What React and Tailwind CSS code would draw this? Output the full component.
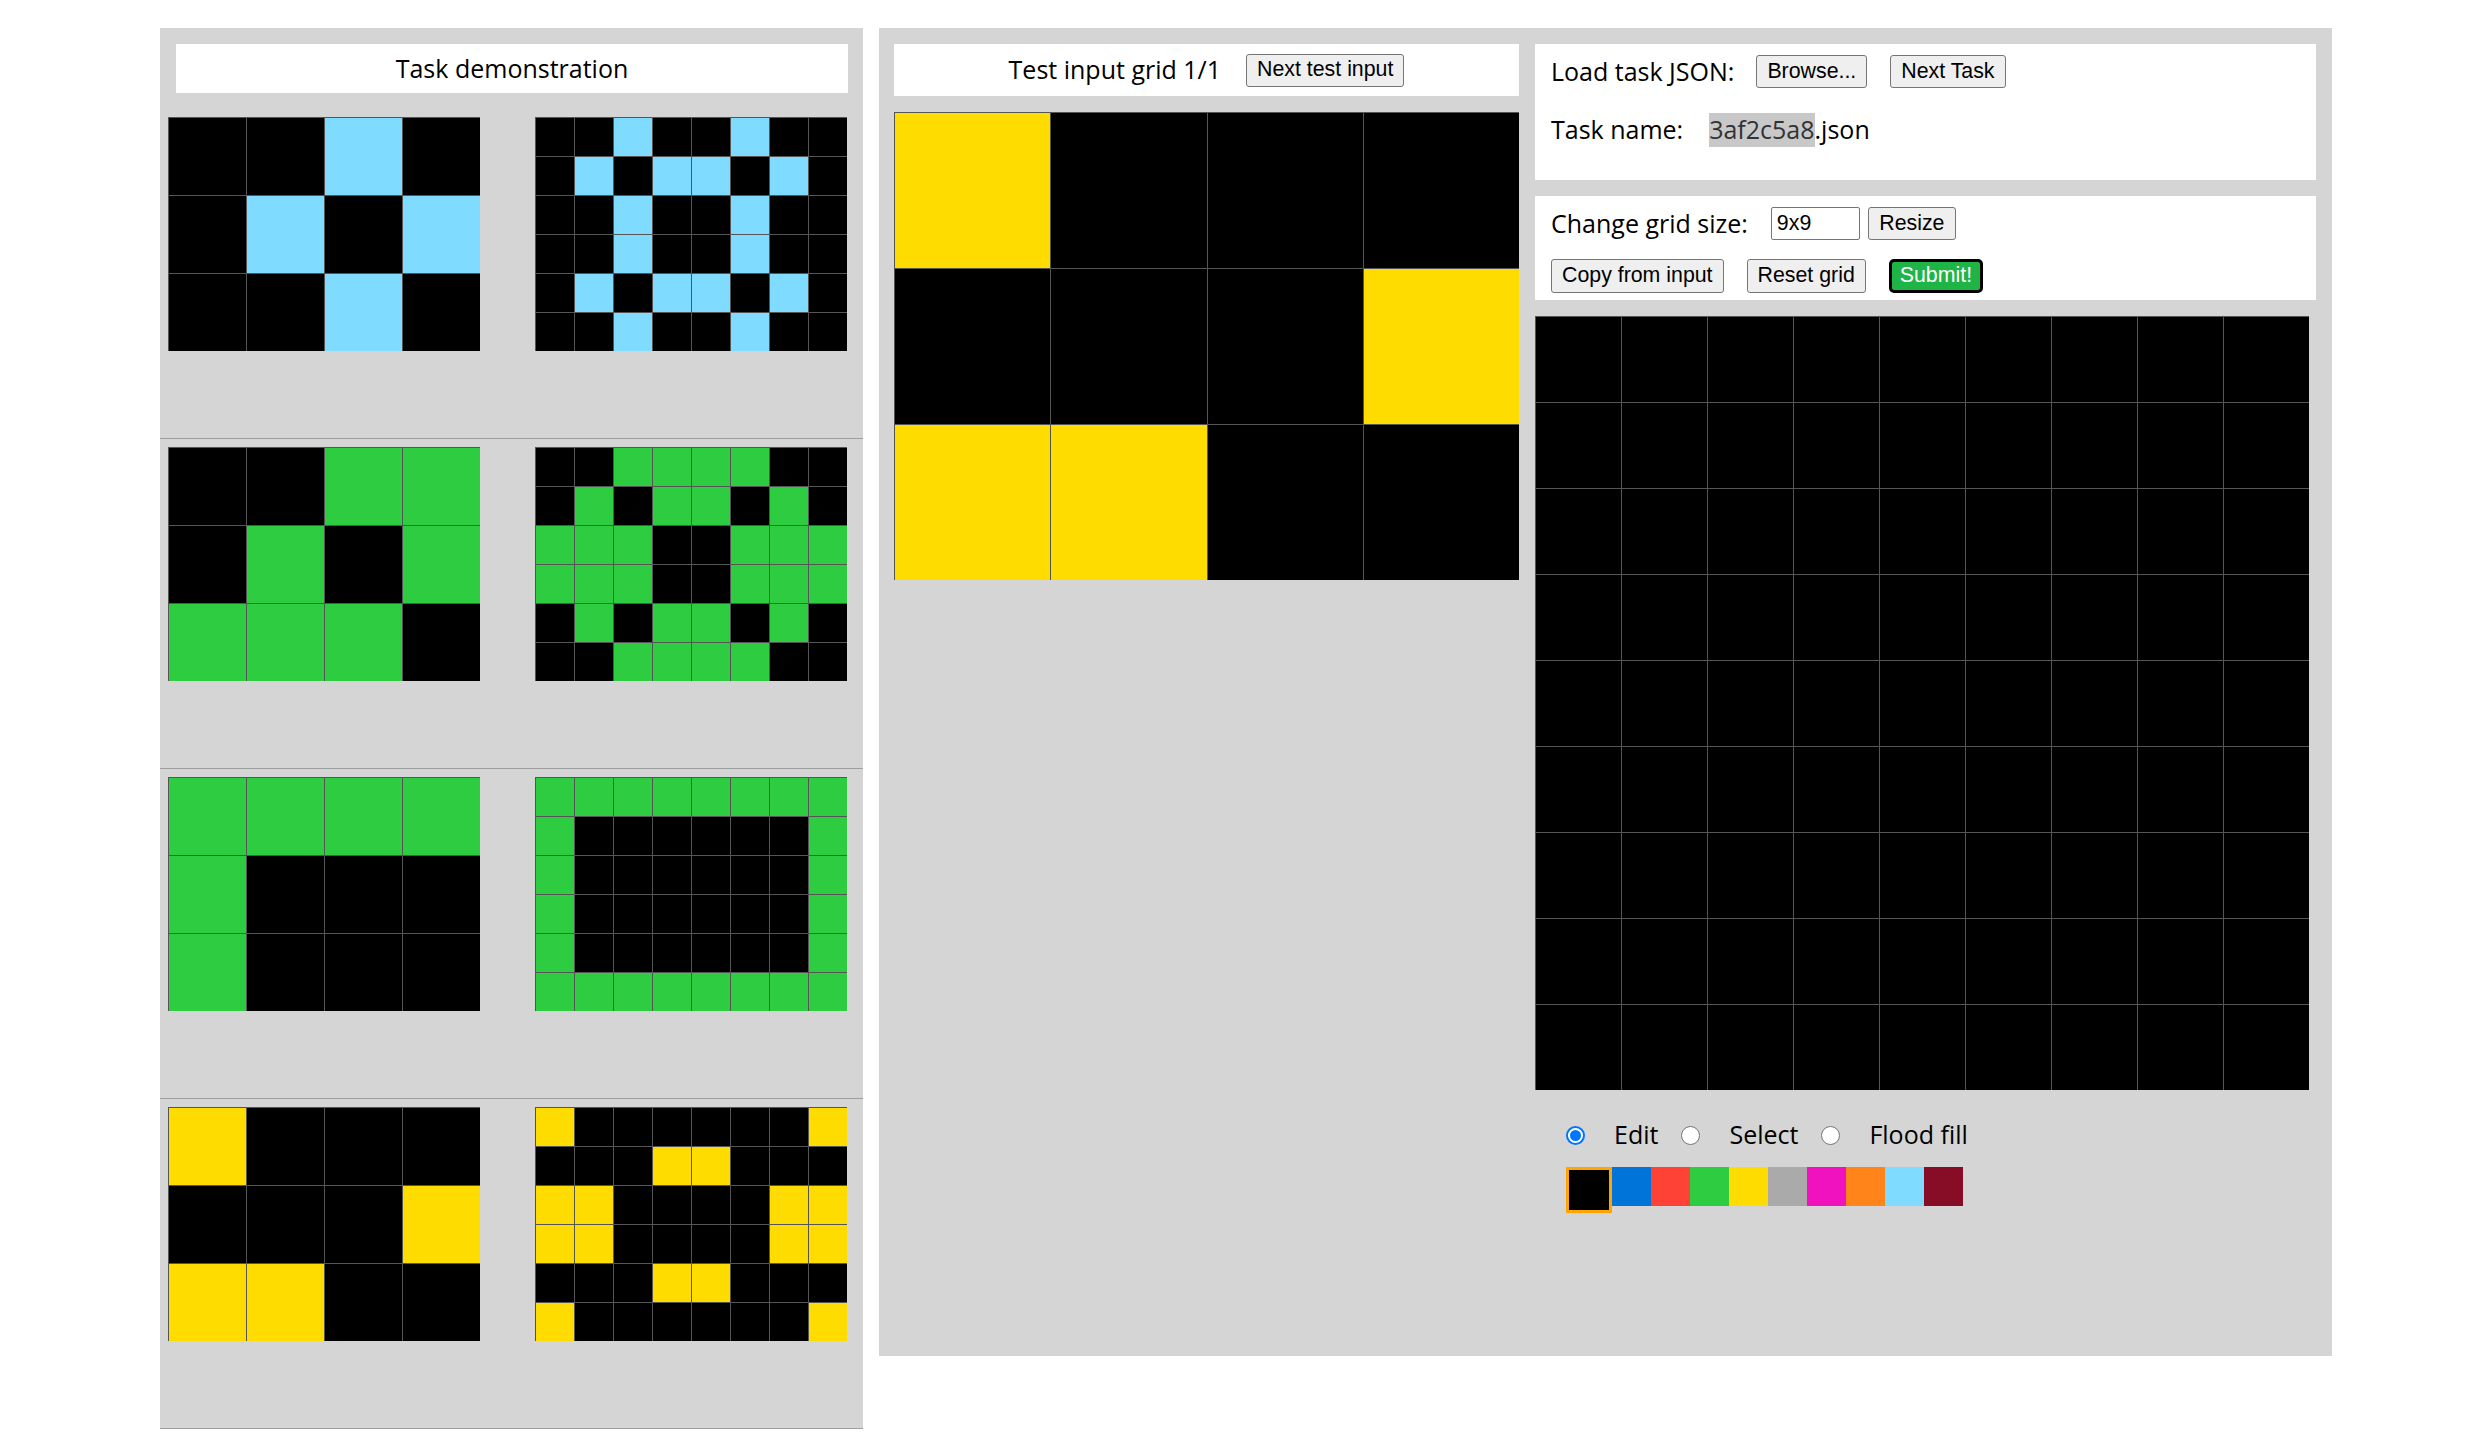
import React, { useState } from 'react';

const COLORS = ['#000000', '#0074D9', '#FF4136', '#2ECC40', '#FFDC00', '#AAAAAA', '#F012BE', '#FF851B', '#7FDBFF', '#870C25'];

const CELL_BG = {
  0: 'bg-black',
  3: 'bg-[#2ECC40]',
  4: 'bg-[#FFDC00]',
  8: 'bg-[#7FDBFF]',
};

// mirror a grid left-right then top-bottom, same as the task does
const mirror = (g) => {
  const wide = g.map(row => [...row, ...[...row].reverse()]);
  return [...wide, ...[...wide].reverse()];
};

const PAIRS = [
  [[0, 0, 8, 0], [0, 8, 0, 8], [0, 0, 8, 0]],
  [[0, 0, 3, 3], [0, 3, 0, 3], [3, 3, 3, 0]],
  [[3, 3, 3, 3], [3, 0, 0, 0], [3, 0, 0, 0]],
  [[4, 0, 0, 0], [0, 0, 0, 4], [4, 4, 0, 0]],
];

const TEST_INPUT = [[4, 0, 0, 0], [0, 0, 0, 4], [4, 4, 0, 0]];

const btn = "h-[33px] px-[10px] bg-[#efefef] border border-[#767676] rounded-[3px] text-[21.33px] leading-none text-black font-['Liberation_Sans',Arial,sans-serif]";

function Grid({ data, cols, cell }) {
  return (
    <div className={`grid ${cols}`}>
      {data.flat().map((v, i) => (
        <div key={i} className={`${cell} ${CELL_BG[v]} border-l border-t border-[#555]`} />
      ))}
    </div>
  );
}

function Radio({ checked }) {
  if (checked) {
    return (
      <div className="w-[19px] h-[19px] rounded-full border-2 border-[#0075ff] bg-white flex items-center justify-center">
        <div className="w-[11px] h-[11px] rounded-full bg-[#0075ff]" />
      </div>
    );
  }
  return <div className="w-[19px] h-[19px] rounded-full border-[1.5px] border-[#767676] bg-white" />;
}

export default function App() {
  const [mode, setMode] = useState('edit');
  const [selected, setSelected] = useState(0);
  const output = Array.from({ length: 9 }, () => Array(9).fill(0));

  return (
    <div className="min-h-[1443px] bg-white flex items-start pl-[160px] pt-[28px] font-['Open_Sans',sans-serif] text-black text-[25px]">
      {/* demonstration pairs */}
      <div className="w-[703px] bg-[#d5d5d5] pt-[16px]">
        <div className="ml-[16px] mr-[15px] h-[49px] bg-white flex items-center justify-center">
          Task demonstration
        </div>
        <div className="mt-[16px]">
          {PAIRS.map((input, i) => (
            <div key={i} className="pt-[8px] pb-[87px] pl-[8px] border-b border-[#9e9e9e] flex gap-[55px]">
              <Grid data={input} cols="grid-cols-4" cell="w-[78px] h-[78px]" />
              <Grid data={mirror(input)} cols="grid-cols-8" cell="w-[39px] h-[39px]" />
            </div>
          ))}
        </div>
      </div>

      {/* test input + output editor */}
      <div className="ml-[16px] w-[1453px] h-[1328px] bg-[#d5d5d5] flex">
        <div className="w-[656px] pl-[15px] pt-[16px]">
          <div className="w-[625px] h-[52px] bg-white flex items-center justify-center gap-[25px]">
            <span>Test input grid 1/1</span>
            <button className={btn}>Next test input</button>
          </div>
          <div className="mt-[16px] w-[625px]">
            <Grid data={TEST_INPUT} cols="grid-cols-4" cell="h-[156px]" />
          </div>
        </div>

        <div className="w-[781px] pt-[16px]">
          <div className="h-[136px] bg-white px-[16px] pt-[11px]">
            <div className="h-[33px] flex items-center">
              <span>Load task JSON:</span>
              <button className={`${btn} ml-[22px]`}>Browse...</button>
              <button className={`${btn} ml-[23px]`}>Next Task</button>
            </div>
            <div className="mt-[25px] h-[34px] flex items-center">
              <span>Task name:</span>
              <span className="ml-[26px] h-[34px] flex items-center bg-[#c8c8c8] text-[#333]">3af2c5a8</span>
              <span>.json</span>
            </div>
          </div>

          <div className="mt-[16px] h-[104px] bg-white px-[16px] pt-[11px]">
            <div className="h-[33px] flex items-center">
              <span>Change grid size:</span>
              <input
                defaultValue="9x9"
                className="ml-[23px] w-[89px] h-[33px] px-[5px] border border-[#767676] rounded-[2px] text-[21.33px] font-['Liberation_Sans',Arial,sans-serif] outline-none"
              />
              <button className={`${btn} ml-[8px] w-[88px]`}>Resize</button>
            </div>
            <div className="mt-[19px] h-[34px] flex items-center gap-[23px]">
              <button className={`${btn} h-[34px]`}>Copy from input</button>
              <button className={`${btn} h-[34px]`}>Reset grid</button>
              <button className="h-[34px] px-[8px] bg-[#1fb446] border-[3px] border-black rounded-[5px] text-white text-[21.33px] leading-none font-['Liberation_Sans',Arial,sans-serif]">
                Submit!
              </button>
            </div>
          </div>

          <div className="mt-[16px] w-[774px]">
            <Grid data={output} cols="grid-cols-9" cell="w-[86px] h-[86px]" />
          </div>

          <div className="mt-[29px] h-[32px] pl-[31px] flex items-center">
            {[['edit', 'Edit'], ['select', 'Select'], ['flood', 'Flood fill']].map(([key, label], i) => (
              <label
                key={key}
                onClick={() => setMode(key)}
                className={`flex items-center ${i > 0 ? 'ml-[23px]' : ''}`}
              >
                <Radio checked={mode === key} />
                <span className="ml-[29px]">{label}</span>
              </label>
            ))}
          </div>

          <div className="mt-[16px] pl-[31px] flex items-start">
            {COLORS.map((c, i) => (
              <div
                key={c}
                onClick={() => setSelected(i)}
                style={{ backgroundColor: c }}
                className={selected === i ? 'w-[46px] h-[46px] border-[3px] border-[#ffa500]' : 'w-[39px] h-[39px]'}
              />
            ))}
          </div>
        </div>
      </div>
    </div>
  );
}
